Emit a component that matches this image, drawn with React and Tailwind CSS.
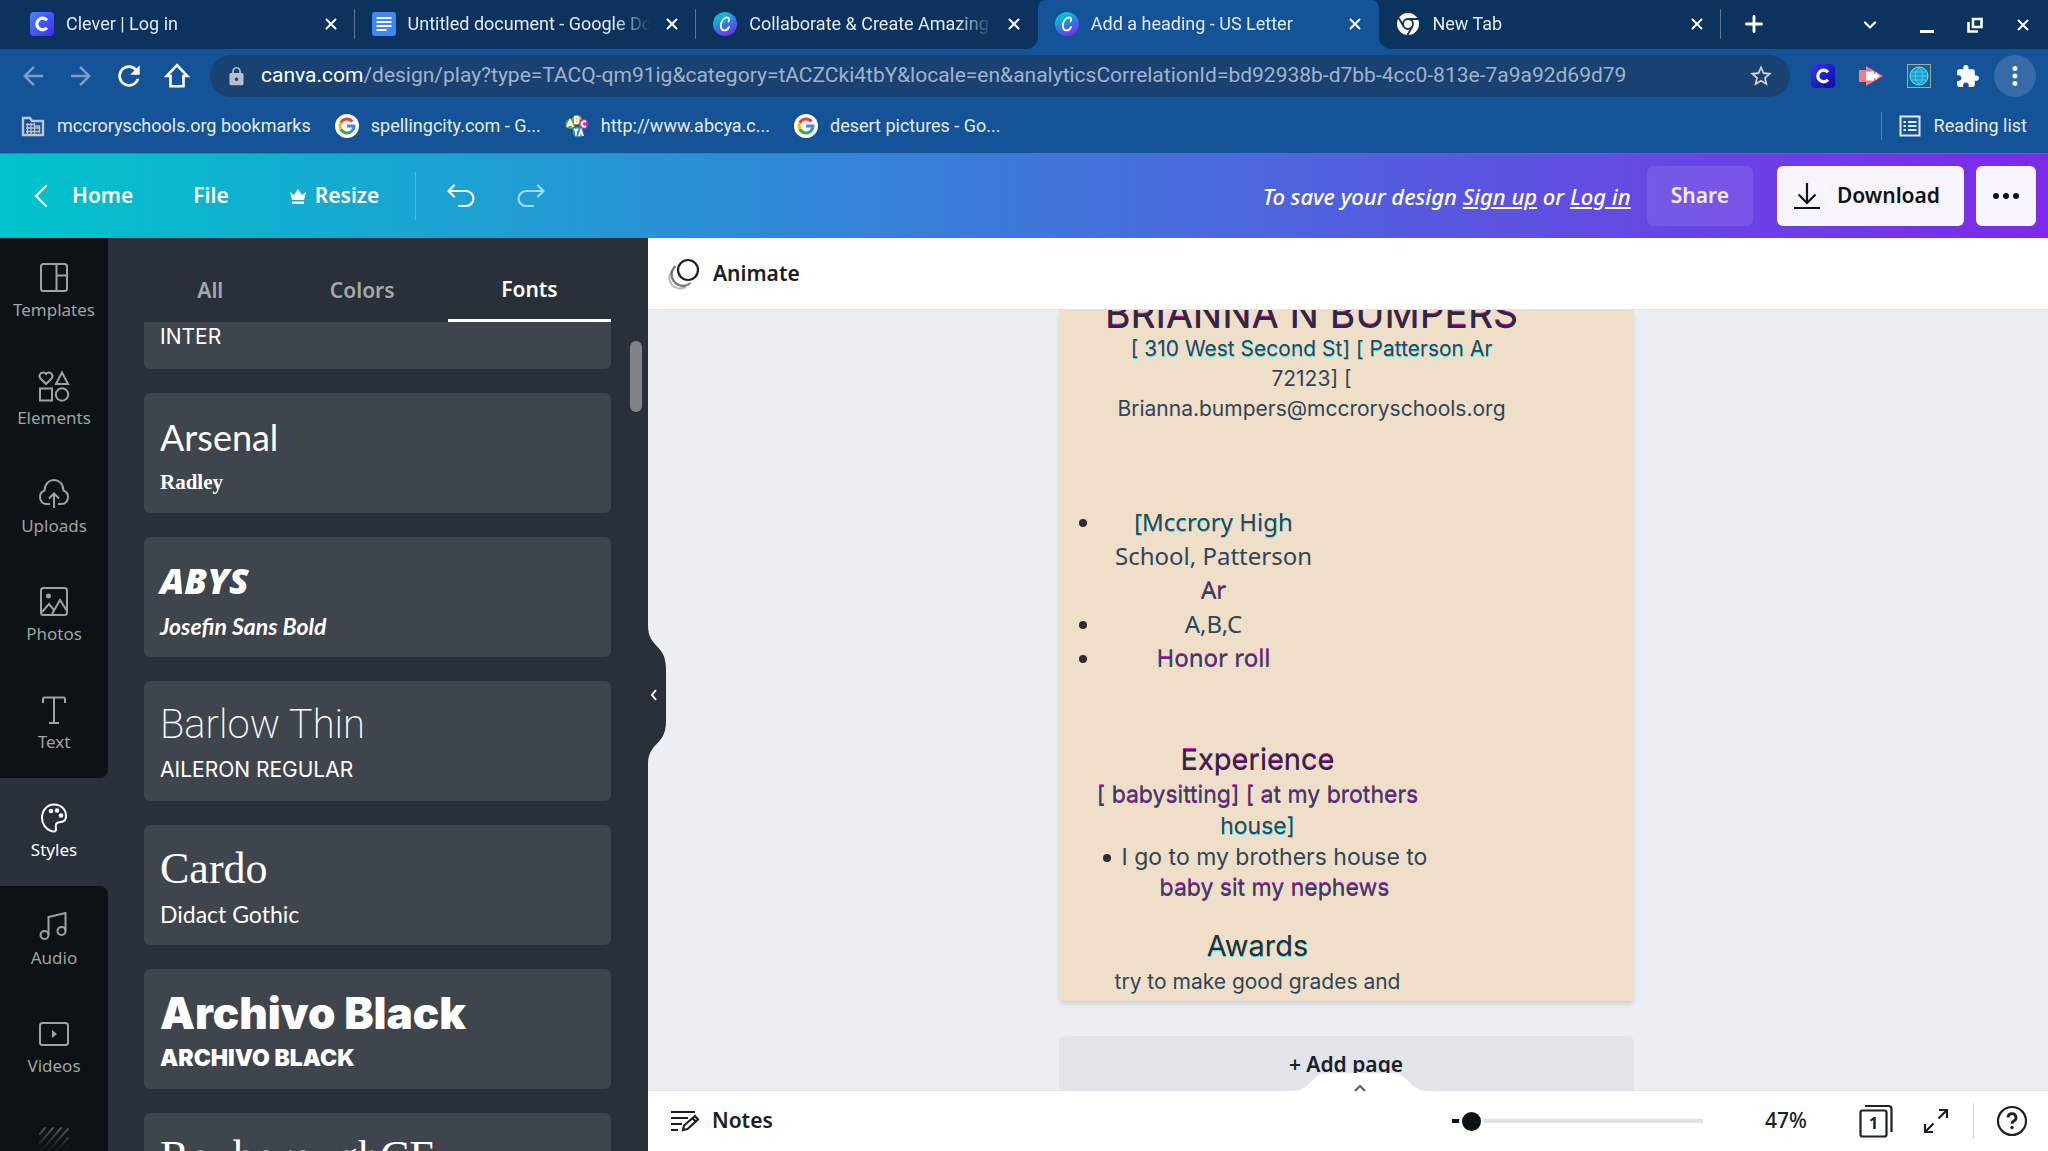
import { useState } from 'react'
import clsx from 'clsx'
import { X, Plus, ChevronDown } from 'lucide-react'
import {
  MdArrowBack, MdArrowForward, MdRefresh, MdLock, MdStarBorder, MdExtension, MdMoreVert,
} from 'react-icons/md'

function CanvaLogo() {
  return (
    <svg viewBox="0 0 24 24" className="size-6 shrink-0">
      <defs>
        <linearGradient id="canva" x1="0.2" y1="0" x2="0.7" y2="1">
          <stop offset="0" stopColor="#00c4cc" />
          <stop offset="0.2" stopColor="#0fb8d0" />
          <stop offset="0.6" stopColor="#3a6ee8" />
          <stop offset="1" stopColor="#7d2ae8" />
        </linearGradient>
      </defs>
      <circle cx="12" cy="12" r="12" fill="url(#canva)" />
      <path
        d="M15.5 9.5c1.3-1.6.7-4.2-1.4-4.2-3 0-6.300 4.400-6.300 8.500 0 2.800 1.300 4.600 3.600 4.600 2.100 0 3.700-1.400 4.700-3.400"
        fill="none"
        stroke="#fff"
        strokeWidth="1.8"
        strokeLinecap="round"
      />
    </svg>
  )
}

function CleverLogo({ id, from, to }) {
  return (
    <svg viewBox="0 0 24 24" className="size-6 shrink-0">
      <defs>
        <linearGradient id={id} x1="0" y1="0" x2="1" y2="1">
          <stop offset="0" stopColor={from} />
          <stop offset="1" stopColor={to} />
        </linearGradient>
      </defs>
      <rect width="24" height="24" rx="4" fill={`url(#${id})`} />
      <path d="M17 8.2a5.800 5.800 0 1 0 0 7.600" fill="none" stroke="#fff" strokeWidth="3.2" />
    </svg>
  )
}

function DocsLogo() {
  return (
    <svg viewBox="0 0 24 24" className="size-6 shrink-0">
      <rect width="24" height="24" rx="3" fill="#4285f4" />
      <path d="M4.500 6h15M4.500 10h15M4.500 14h15M4.500 18h10" stroke="#fff" strokeWidth="2" />
    </svg>
  )
}

function ChromeLogo() {
  return (
    <svg viewBox="0 0 24 24" className="size-6 shrink-0">
      <circle cx="12" cy="12" r="11" fill="#fff" />
      <circle cx="12" cy="12" r="5" fill="none" stroke="#0b335d" strokeWidth="1.8" />
      <path d="M12 7h10M7.700 14.500 2.700 6M16.300 14.500 11.500 23" stroke="#0b335d" strokeWidth="1.8" />
    </svg>
  )
}

function GoogleLogo() {
  return (
    <svg viewBox="0 0 24 24" className="size-6 shrink-0">
      <circle cx="12" cy="12" r="12" fill="#fff" />
      <g fill="none" strokeWidth="3">
        <path d="M17.400 7.600A7 7 0 0 0 5.800 8.700" stroke="#ea4335" />
        <path d="M5.800 8.700a7 7 0 0 0 0 6.600" stroke="#fbbc05" />
        <path d="M5.800 15.300A7 7 0 0 0 16.500 17.300" stroke="#34a853" />
        <path d="M16.500 17.300A7 7 0 0 0 19 12h-7" stroke="#4285f4" />
      </g>
    </svg>
  )
}

function AbcyaLogo() {
  return (
    <svg viewBox="0 0 24 24" className="size-6 shrink-0">
      <circle cx="12" cy="6" r="5" fill="#e8922a" />
      <circle cx="5.500" cy="10" r="5" fill="#6aa83a" />
      <circle cx="18.500" cy="10" r="5" fill="#a73b9b" />
      <circle cx="13" cy="18" r="5.500" fill="#2a8fb9" />
      <g fill="none" stroke="#fff" strokeWidth="2">
        <path d="m2 13 3-6.500L8 13M3.500 11h3" />
        <path d="M10 3v6h2.500a1.600 1.600 0 0 0 0-3 1.600 1.600 0 0 0 0-3z" />
        <path d="M21 8a2.600 2.600 0 1 0 0 4M9 14.500l2 3 2-3M11 17.500v4M14 22l2-5.500 2 5.500" />
      </g>
    </svg>
  )
}

const tabs = [
  { title: 'Clever | Log in', icon: <CleverLogo id="clever-tab" from="#4a83ff" to="#3a2df0" />, divider: true },
  { title: 'Untitled document - Google Docs', icon: <DocsLogo />, divider: true },
  { title: 'Collaborate & Create Amazing Graphic', icon: <CanvaLogo />, className: 'rounded-br-xl' },
  { title: 'Add a heading - US Letter', icon: <CanvaLogo />, active: true },
  { title: 'New Tab', icon: <ChromeLogo />, divider: true, className: 'rounded-bl-xl' },
]

function TabStrip() {
  return (
    <div className="flex h-[49px] items-stretch bg-[#0b335d] pl-[13px]">
      <div className="flex w-[1708px] min-w-0 bg-linear-to-b from-[#0b335d] from-50% to-[#155399] to-50%">
        {tabs.map((tab) => (
          <div
            key={tab.title}
            className={clsx(
              'flex min-w-0 flex-1 items-center gap-3 pb-0.5 pl-[17px]',
              tab.active ? 'rounded-t-lg bg-[#155399]' : 'bg-[#0b335d]',
              tab.className
            )}
          >
            {tab.icon}
            <span className="min-w-0 flex-1 overflow-hidden [mask-image:linear-gradient(to_right,#000_85%,transparent)] text-lg leading-6 whitespace-nowrap text-[#e3e9f0]">
              {tab.title}
            </span>
            <button type="button" aria-label={`Close ${tab.title}`} className="text-white">
              <X size={18} strokeWidth={2.6} />
            </button>
            <span className={clsx('ml-0.5 h-[30px] w-px', tab.divider && 'bg-[#5c7793]')} />
          </div>
        ))}
      </div>
      <button type="button" aria-label="New tab" className="ml-5 pb-0.5 text-white">
        <Plus size={26} strokeWidth={2.6} />
      </button>
      <div className="ml-auto flex items-center gap-[30px] pr-4 text-white">
        <button type="button" aria-label="Search tabs" className="mr-2"><ChevronDown size={20} strokeWidth={2.6} /></button>
        <button type="button" aria-label="Minimize">
          <svg viewBox="0 0 18 18" className="size-[18px]"><path d="M2 15.500h14" stroke="currentColor" strokeWidth="3" /></svg>
        </button>
        <button type="button" aria-label="Restore">
          <svg viewBox="0 0 18 18" className="size-[18px]"><path d="M7 3h8.500v8H7zM2.500 6v9.500h9.500" fill="none" stroke="currentColor" strokeWidth="2.600" /></svg>
        </button>
        <button type="button" aria-label="Close window"><X size={18} strokeWidth={2.6} /></button>
      </div>
    </div>
  )
}

const toolButton = 'grid h-12 w-12 place-items-center'

function AddressBar() {
  return (
    <div className="flex h-[54px] items-center bg-[#155399] pr-3 pl-[9px] text-white">
      <button type="button" aria-label="Back" className={clsx(toolButton, 'text-[#7c9fc8]')}><MdArrowBack size={30} /></button>
      <button type="button" aria-label="Forward" className={clsx(toolButton, 'text-[#7c9fc8]')}><MdArrowForward size={30} /></button>
      <button type="button" aria-label="Reload" className={toolButton}><MdRefresh size={32} /></button>
      <button type="button" aria-label="Home" className={toolButton}>
        <svg viewBox="0 0 24 24" className="size-[26px]"><path d="M12 2 2.500 12H6v9.500h12V12h3.500z" fill="none" stroke="currentColor" strokeWidth="2.400" /></svg>
      </button>
      <div className="mx-[9px] flex h-[42px] min-w-0 flex-1 items-center rounded-full bg-[#194273] px-4">
        <MdLock size={21} className="text-[#b9bfc7]" />
        <p className="ml-[14px] flex-1 text-[21px] whitespace-nowrap text-[#a1b3c8]">
          <span className="text-white">canva.com</span>
          /design/play?type=TACQ-qm91ig&category=tACZCki4tbY&locale=en&analyticsCorrelationId=bd92938b-d7bb-4cc0-813e-7a9a92d69d79
        </p>
        <button type="button" aria-label="Bookmark this page" className="text-[#d2d2d0]"><MdStarBorder size={26} /></button>
      </div>
      <button type="button" aria-label="Clever" className={toolButton}><CleverLogo id="clever-ext" from="#3038f0" to="#0a0aa8" /></button>
      <button type="button" aria-label="Screen recorder" className={toolButton}>
        <svg viewBox="0 0 24 24" className="size-6">
          <path d="M0 6h7V2l17 10L7 22v-4H0z" fill="#ff7a7a" />
          <path d="M7 7.500h8v3l3-2.500v2l3 2-3 2v2l-3-2.500v3H7z" fill="#fff" />
        </svg>
      </button>
      <button type="button" aria-label="Web filter" className={toolButton}>
        <svg viewBox="0 0 24 24" className="size-6">
          <rect width="24" height="24" fill="#9aaaa4" />
          <rect x="1" y="1" width="22" height="22" fill="#10668f" />
          <circle cx="12" cy="12" r="9" fill="#189fd2" stroke="#7fdcf5" />
          <path d="M5 8h14M4 12h16M5 16h14M12 4c-5 4-5 12 0 16M12 4c5 4 5 12 0 16" fill="none" stroke="#5fcdf0" strokeWidth="0.8" />
        </svg>
      </button>
      <button type="button" aria-label="Extensions" className={toolButton}><MdExtension size={25} /></button>
      <button type="button" aria-label="Menu" className="ml-[3px] grid size-[42px] place-items-center rounded-full bg-[#376ba8]">
        <MdMoreVert size={30} />
      </button>
    </div>
  )
}

function BookmarksBar() {
  return (
    <div className="flex h-[51px] items-center border-b border-[#4579b3] bg-[#155399] px-[21px] pb-1 text-lg text-[#e4ebf3]">
      <a href="#bookmarks" className="flex items-center gap-3">
        <svg viewBox="0 0 24 24" className="size-6 text-[#c4c4c4]">
          <path d="M2 4h7l2 3h11v14H2z" fill="none" stroke="currentColor" strokeWidth="2.400" />
          <path d="M5 10.500h9M5 14h14M5 17.500h14M6.500 9v11M10 9v11M13.500 9v11M18.500 12v7M14 12h5" stroke="currentColor" strokeWidth="1.300" />
        </svg>
        mccroryschools.org bookmarks
      </a>
      <a href="#spelling" className="ml-6 flex items-center gap-3"><GoogleLogo />spellingcity.com - G...</a>
      <a href="#abcya" className="ml-6 flex items-center gap-3"><AbcyaLogo />http://www.abcya.c...</a>
      <a href="#desert" className="ml-6 flex items-center gap-3"><GoogleLogo />desert pictures - Go...</a>
      <a href="#reading" className="ml-auto flex items-center gap-3 border-l border-[#4f7fb5] pl-4">
        <svg viewBox="0 0 24 24" className="size-6">
          <rect x="2.500" y="2.500" width="19" height="19" fill="none" stroke="currentColor" strokeWidth="2" />
          <path d="M5.500 8H8M10 8h8.500M5.500 12H8M10 12h8.500M5.500 16H8M10 16h8.500" stroke="currentColor" strokeWidth="2" />
        </svg>
        Reading list
      </a>
    </div>
  )
}

function Header() {
  return (
    <header className="flex h-[84px] items-center bg-linear-to-r/srgb from-[#00c4cc] to-[#7d2ae8] pr-3 pl-8 text-[21px] font-semibold text-white">
      <button type="button" className="flex items-center gap-5">
        <svg viewBox="0 0 20 24" className="h-6 w-5"><path d="M14 2 4 12l10 10" fill="none" stroke="currentColor" strokeWidth="2.200" strokeLinecap="round" /></svg>
        Home
      </button>
      <button type="button" className="ml-[60px]">File</button>
      <button type="button" className="ml-[60px] flex items-center gap-2">
        <svg viewBox="0 0 18 18" className="size-[18px]" fill="currentColor">
          <path d="m1 5 4 3 4-6 4 6 4-3-2 8H3zM3 14.500h12V17H3z" />
        </svg>
        Resize
      </button>
      <span className="mr-[30px] ml-9 h-12 w-px bg-white/25" />
      <div className="flex gap-10">
        <button type="button" aria-label="Undo">
          <svg viewBox="0 0 30 24" className="h-6 w-[30px]"><path d="M8 1.500 2.500 7 8 12.500M2.500 7H20a7.500 7.500 0 0 1 0 15h-7" fill="none" stroke="currentColor" strokeWidth="2.200" strokeLinecap="round" strokeLinejoin="round" /></svg>
        </button>
        <button type="button" aria-label="Redo" className="opacity-60">
          <svg viewBox="0 0 30 24" className="h-6 w-[30px]"><path d="M22 1.500 27.500 7 22 12.500M27.500 7H10a7.500 7.500 0 0 0 0 15h7" fill="none" stroke="currentColor" strokeWidth="2.200" strokeLinecap="round" strokeLinejoin="round" /></svg>
        </button>
      </div>
      <p className="ml-auto text-[22px] font-medium whitespace-nowrap italic">
        To save your design <a href="#signup" className="underline">Sign up</a> or <a href="#login" className="underline">Log in</a>
      </p>
      <button type="button" className="ml-4 h-[60px] rounded-md bg-white/10 px-6 text-white/90">Share</button>
      <button type="button" className="ml-6 flex h-[60px] items-center gap-4 rounded-md bg-[#f7f4fe] pr-6 pl-4 text-[#0e1318]">
        <svg viewBox="0 0 28 28" className="size-7"><path d="M14 1v20M5.500 12.500 14 21l8.500-8.500M1 26h26" fill="none" stroke="currentColor" strokeWidth="2.200" /></svg>
        Download
      </button>
      <button type="button" aria-label="More" className="ml-3 grid h-[60px] w-[60px] place-items-center rounded-md bg-[#f7f4fe] text-[#0e1318]">
        <svg viewBox="0 0 28 8" className="h-2 w-7" fill="currentColor"><circle cx="4" cy="4" r="3" /><circle cx="14" cy="4" r="3" /><circle cx="24" cy="4" r="3" /></svg>
      </button>
    </header>
  )
}

const railIcons = {
  Templates: <><rect x="3" y="2" width="26" height="27" rx="2.500" /><path d="M18.500 2v27M18.500 13.500H29" /></>,
  Elements: <><path d="M8 14 2.500 8.500C-.5 4.500 5 0 8 4c3-4 8.500.5 5.500 4.500zM24 2.500 30 14H18zM2 18.500h12v12H2z" /><circle cx="24" cy="24.500" r="6.200" /></>,
  Uploads: <path d="M12 26H8.500A7 7 0 0 1 6.500 12.500C7-1.500 25-1.500 25.500 12.500A7 7 0 0 1 23.500 26H20M16 30V16M11 20.500l5-5 5 5" />,
  Photos: <><rect x="3" y="2" width="26" height="27" rx="2.500" /><circle cx="10.500" cy="10" r="1.500" fill="currentColor" /><path d="m4 26 7-8 5 6M14 28l8-14 7 11" /></>,
  Text: <path d="M5 9V5c0-1 .5-1.500 1.500-1.500h19c1 0 1.500.5 1.500 1.500v4M16 3.500V29M11 29h10" />,
  Styles: (
    <>
      <path d="M16 2.500c-7 0-12 6-12 13.500 0 6 4 11 8 12.500 3 1.500 6 1.500 6-1s-1.500-6 2-7c3-.5 8 0 8-6.500C28 7.500 23 2.500 16 2.500z" />
      <g fill="currentColor"><circle cx="13" cy="9" r="1.300" /><circle cx="19" cy="8.500" r="1.300" /><circle cx="23" cy="13.500" r="1.300" /></g>
    </>
  ),
  Audio: <><circle cx="6.500" cy="25" r="4" /><circle cx="23.500" cy="21" r="4" /><path d="M10.500 25V7l17-4v18" /></>,
  Videos: <><rect x="2" y="5" width="28" height="22" rx="2.500" /><path d="m14 12 5 4-5 4z" fill="currentColor" stroke="none" /></>,
}

const railItem = 'flex h-[108px] shrink-0 flex-col items-center gap-1 pt-6 text-[17px] leading-6'

function Rail() {
  const [active, setActive] = useState('Styles')
  const names = Object.keys(railIcons)
  const current = names.indexOf(active)

  return (
    <nav className="flex w-[108px] shrink-0 flex-col overflow-hidden bg-[#293039] text-[#9fa2a4]">
      {names.map((name, i) => (
        <button
          key={name}
          type="button"
          onClick={() => setActive(name)}
          className={clsx(
            railItem,
            i === current ? 'text-white' : 'bg-[#0d1216]',
            i === current - 1 && 'rounded-br-lg',
            i === current + 1 && 'rounded-tr-lg'
          )}
        >
          <svg viewBox="0 0 32 32" className="size-8" fill="none" stroke="currentColor" strokeWidth="2">{railIcons[name]}</svg>
          {name}
        </button>
      ))}
      <button type="button" aria-label="Background" className={clsx(railItem, 'bg-[#0d1216] text-[#54585b]')}>
        <svg viewBox="0 0 32 32" className="size-8 [mask-image:linear-gradient(#000,transparent_80%)]" stroke="currentColor" strokeWidth="2" strokeLinecap="round">
          <path d="M2 8 7 2M2 17 15 2M2 26 23 2M3 33 30 3M11 33l19-21M19 33l11-12" />
        </svg>
      </button>
    </nav>
  )
}

// the list is scrolled: the first and last set are only partly in view
const fontSets = [
  { sub: 'INTER', subClass: "font-['Inter',sans-serif] text-[21px]" },
  { title: 'Arsenal', titleClass: "font-['Lato',sans-serif] text-[36px]", sub: 'Radley', subClass: "font-['Liberation_Serif',serif] text-[21px] font-bold" },
  { title: 'ABYS', titleClass: "font-['Open_Sans',sans-serif] text-[36px] font-extrabold italic", sub: 'Josefin Sans Bold', subClass: "font-['Lato',sans-serif] text-[23px] font-bold italic" },
  { title: 'Barlow Thin', titleClass: "font-['Roboto',sans-serif] text-[40px] font-extralight", sub: 'AILERON REGULAR', subClass: "font-['Inter',sans-serif] text-[21px]" },
  { title: 'Cardo', titleClass: "font-['Liberation_Serif',serif] text-[44px]", sub: 'Didact Gothic', subClass: "font-['Lato',sans-serif] text-[23px]" },
  { title: 'Archivo Black', titleClass: "font-['Inter',sans-serif] text-[44px] font-black", sub: 'ARCHIVO BLACK', subClass: "font-['Inter',sans-serif] text-[23px] font-black" },
  { title: 'RoxboroughCF', titleClass: "font-['Liberation_Serif',serif] text-[44px]" },
]

function StylesPanel() {
  return (
    <aside className="relative flex w-[540px] shrink-0 flex-col bg-[#293039] pr-[37px] pl-9">
      <div className="flex h-[84px] shrink-0 items-stretch pt-[22px] text-[21px] font-semibold text-[#a5a8ab]">
        <button type="button" className="flex-auto">All</button>
        <button type="button" className="flex-auto">Colors</button>
        <button type="button" className="flex-auto border-b-3 border-white text-white">Fonts</button>
      </div>
      <div className="flex min-h-0 flex-1 flex-col gap-6 overflow-hidden">
        {fontSets.map((set) => (
          <button
            key={set.title || set.sub}
            type="button"
            className={clsx(
              'flex shrink-0 flex-col items-start gap-[7px] bg-[#3f454c] px-4 text-white',
              set.title ? 'h-[120px] rounded-md pt-5' : 'h-[47px] rounded-b-md pt-px'
            )}
          >
            {set.title && <span className={clsx('leading-[48px] whitespace-nowrap', set.titleClass)}>{set.title}</span>}
            {set.sub && <span className={clsx('leading-7', set.subClass)}>{set.sub}</span>}
          </button>
        ))}
      </div>
      <span className="absolute top-[103px] right-1.5 h-[71px] w-3 rounded-full bg-[#808387]" />
      <button type="button" aria-label="Hide panel" className="absolute top-[387px] -right-[18px] z-10 h-[140px] w-[18px]">
        <svg viewBox="0 0 18 140" className="h-[140px] w-[18px]">
          <path d="M0 0c0 24 18 18 18 44v52c0 26-18 20-18 44z" fill="#293039" />
          <path d="m8 65-4 5 4 5" fill="none" stroke="#fff" strokeWidth="2" />
        </svg>
      </button>
    </aside>
  )
}

const cyan = '[text-shadow:0_1px_0_#30e8e8]'
const magenta = '[text-shadow:0_-1px_0_#e810e0]'

function Bullet({ className, children }) {
  return (
    <li className="flex">
      <span className={clsx('size-2 shrink-0 rounded-full bg-[#2b2f33]', className)} />
      <p className="flex-1">{children}</p>
    </li>
  )
}

function DesignPage() {
  return (
    <div className="relative h-[691px] w-[575px] shrink-0 overflow-hidden bg-[#efdec8] font-['Inter',sans-serif] text-[#2f4558] shadow-md">
      <div className="absolute -top-4 left-7 w-[450px] text-center">
        <h1 className={clsx('text-[39px] leading-10 whitespace-nowrap text-[#2a2c38]', magenta)}>BRIANNA N BUMPERS</h1>
        <p className="text-[21px] leading-[30px]">
          <span className={cyan}>[ 310 West Second St] [ Patterson Ar</span><br />
          72123] [<br />
          Brianna.bumpers@mccroryschools.org
        </p>
      </div>
      <ul className="absolute top-[195px] left-5 w-[236px] text-center font-['Noto_Sans',sans-serif] text-2xl leading-[34px]">
        <Bullet className="mt-[14px] mr-[26px]">
          <span className={cyan}>[Mccrory High</span><br />
          School, Patterson<br />
          <span className={magenta}>Ar</span>
        </Bullet>
        <Bullet className="mt-[14px] mr-[26px]">A,B,C</Bullet>
        <Bullet className="mt-[14px] mr-[26px]"><span className={magenta}>Honor roll</span></Bullet>
      </ul>
      <div className="absolute top-[430px] left-6 w-[350px] text-center text-[23px] leading-[31px]">
        <h2 className={clsx('text-[29px] leading-10 text-[#2a2c38]', magenta)}>Experience</h2>
        <p>
          <span className={magenta}>[ babysitting] [ at my brothers</span><br />
          <span className={cyan}>house]</span>
        </p>
        <ul className="pl-5">
          <Bullet className="mt-3 mr-1.5">
            I go to my brothers house to<br />
            <span className={magenta}>baby sit my nephews</span>
          </Bullet>
        </ul>
        <h2 className={clsx('mt-[22px] text-[29px] leading-10 text-[#2a2c38]', cyan)}>Awards</h2>
        <p className="text-[21px]">try to make good grades and</p>
      </div>
    </div>
  )
}

function Footer() {
  const [zoom, setZoom] = useState(47)

  return (
    <footer className="relative flex h-[61px] shrink-0 items-center border-t border-[#dfe3e8] bg-white pr-5 pl-[22px] text-[21px]">
      <button type="button" aria-label="Show pages" className="absolute -top-[19px] left-[calc(50%-57px)] h-[22px] w-[138px]">
        <svg viewBox="0 0 138 22" className="h-[22px] w-[138px]">
          <path d="M0 19c22 0 18-18 38-18h62c20 0 16 18 38 18v3H0z" fill="#fff" />
          <path d="m64 19 5-5 5 5" fill="none" stroke="#5b6066" strokeWidth="2" />
        </svg>
      </button>
      <button type="button" className="flex items-center gap-3">
        <svg viewBox="0 0 30 24" className="h-6 w-[30px]" fill="none" stroke="currentColor" strokeWidth="2.200">
          <path d="M1 3h24M1 9h17M1 15h11M1 21h7" />
          <path d="m13 21 1-4.500L25 7l3 3.500L17.500 20zM22.500 9l3 3.500" />
        </svg>
        Notes
      </button>
      <input
        type="range"
        aria-label="Zoom"
        min="33"
        max="500"
        value={zoom}
        onChange={(e) => setZoom(Number(e.target.value))}
        className="ml-auto h-1 w-[251px] appearance-none bg-[linear-gradient(to_right,#0e1318_12px,#dfe3e8_12px)] [&::-webkit-slider-thumb]:size-[25px] [&::-webkit-slider-thumb]:appearance-none [&::-webkit-slider-thumb]:rounded-full [&::-webkit-slider-thumb]:border-3 [&::-webkit-slider-thumb]:border-white [&::-webkit-slider-thumb]:bg-[#0e1318]"
      />
      <span className="ml-[62px] font-medium">{zoom}%</span>
      <button type="button" aria-label="Pages" className="ml-[52px]">
        <svg viewBox="0 0 34 34" className="size-[34px]" fill="none" stroke="currentColor" strokeWidth="2.200">
          <rect x="1.500" y="6.500" width="26" height="26" rx="2" />
          <path d="M6 2h23.500a3 3 0 0 1 3 3v23" />
          <text x="14.500" y="25" textAnchor="middle" className="text-base font-bold" fill="currentColor" stroke="none">1</text>
        </svg>
      </button>
      <button type="button" aria-label="Full screen" className="ml-[30px]">
        <svg viewBox="0 0 26 26" className="size-[26px]" fill="none" stroke="currentColor" strokeWidth="2.200">
          <path d="M16 2h8v8M24 2l-8.500 8.500M10 24H2v-8M2 24l8.500-8.500" />
        </svg>
      </button>
      <span className="mr-[22px] ml-6 h-9 w-px bg-[#d5d9de]" />
      <button type="button" aria-label="Help">
        <svg viewBox="0 0 32 32" className="size-8" fill="none" stroke="currentColor" strokeWidth="2.200">
          <circle cx="16" cy="16" r="14" />
          <path d="M12 12.500a4 4 0 1 1 5.500 3.800c-1 .5-1.500 1-1.500 2.500" strokeWidth="2.800" />
          <circle cx="16" cy="22.500" r="1.700" fill="currentColor" stroke="none" />
        </svg>
      </button>
    </footer>
  )
}

function Editor() {
  return (
    <main className="flex min-w-0 flex-1 flex-col bg-[#ebeff3] font-semibold text-[#1b2026]">
      <div className="flex h-[72px] shrink-0 items-center border-b border-[#dfe3e8] bg-white px-5">
        <button type="button" className="flex items-center gap-[13px] text-[21px]">
          <svg viewBox="0 0 32 32" className="size-8" fill="none" stroke="currentColor" strokeWidth="2.200">
            <circle cx="20" cy="12" r="10" />
            <path d="M7.500 8a10.500 10.500 0 0 0 15 17" opacity=".6" />
            <path d="M4 13a10.500 10.500 0 0 0 14 15.500" opacity=".3" />
          </svg>
          Animate
        </button>
      </div>
      <div className="flex min-h-0 flex-1 flex-col items-center gap-[35px] overflow-hidden pr-1 font-normal">
        <DesignPage />
        <button type="button" className="h-[58px] w-[575px] shrink-0 rounded-t-md bg-[#e1e4e9] text-[21px] font-semibold">+ Add page</button>
      </div>
      <Footer />
    </main>
  )
}

function App() {
  return (
    <div className="flex h-screen flex-col overflow-hidden font-['Noto_Sans','Open_Sans',sans-serif]">
      <div className="font-['Roboto',sans-serif]">
        <TabStrip />
        <AddressBar />
        <BookmarksBar />
      </div>
      <Header />
      <div className="flex min-h-0 flex-1">
        <Rail />
        <StylesPanel />
        <Editor />
      </div>
    </div>
  )
}

export default App
